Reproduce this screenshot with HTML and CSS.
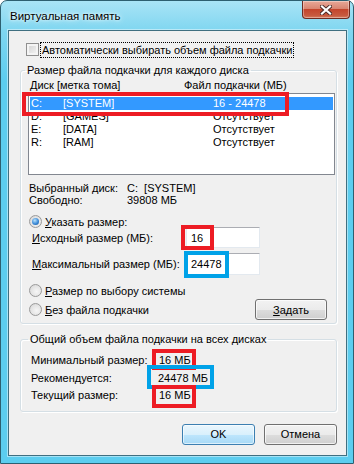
FILE: index.html
```html
<!DOCTYPE html>
<html lang="ru">
<head>
    <meta charset="UTF-8">
    <title>Виртуальная память</title>
    <link rel="stylesheet" href="styles.css">
</head>
<body>
<div class="window">
    <div class="titlebar">
        <span class="title">Виртуальная память</span>
        <div class="close">
            <svg width="12" height="10" viewBox="0 0 12 10">
                <path d="M2 1.5 L10 8.5 M10 1.5 L2 8.5" stroke="#4a2a26" stroke-width="4" stroke-linecap="square"/>
                <path d="M2 1.5 L10 8.5 M10 1.5 L2 8.5" stroke="#ffffff" stroke-width="2.2" stroke-linecap="square"/>
            </svg>
        </div>
    </div>

    <div class="client">
        <div class="check-row">
            <span class="checkbox"></span>
            <span class="focus">Автоматически выбирать объем файла подкачки</span>
        </div>

        <fieldset class="group disks">
            <legend>Размер файла подкачки для каждого диска</legend>
            <div class="list-head">
                <span class="col-disk">Диск [метка тома]</span>
                <span>Файл подкачки (МБ)</span>
            </div>
            <div class="listbox">
                <div class="row selected"><span class="c1">C:</span><span class="c2">[SYSTEM]</span><span>16 - 24478</span></div>
                <div class="row"><span class="c1">D:</span><span class="c2">[GAMES]</span><span>Отсутствует</span></div>
                <div class="row"><span class="c1">E:</span><span class="c2">[DATA]</span><span>Отсутствует</span></div>
                <div class="row"><span class="c1">R:</span><span class="c2">[RAM]</span><span>Отсутствует</span></div>
            </div>

            <div class="info">
                <span>Выбранный диск:</span><span>C:&nbsp; [SYSTEM]</span>
                <span>Свободно:</span><span>39808 МБ</span>
            </div>

            <div class="radio-row first">
                <span class="radio on"></span>
                <span><u>У</u>казать размер:</span>
            </div>
            <div class="field-row">
                <span class="field-label"><u>И</u>сходный размер (МБ):</span>
                <input class="edit" type="text" value="16">
            </div>
            <div class="field-row second">
                <span class="field-label"><u>М</u>аксимальный размер (МБ):</span>
                <input class="edit" type="text" value="24478">
            </div>
            <div class="radio-row system">
                <span class="radio"></span>
                <span><u>Р</u>азмер по выбору системы</span>
            </div>
            <div class="radio-row last">
                <span class="radio"></span>
                <span><u>Б</u>ез файла подкачки</span>
                <button class="btn set"><u>З</u>адать</button>
            </div>
        </fieldset>

        <fieldset class="group totals">
            <legend>Общий объем файла подкачки на всех дисках</legend>
            <div class="total-row"><span>Минимальный размер:</span><span>16 МБ</span></div>
            <div class="total-row"><span>Рекомендуется:</span><span class="wide">24478 МБ</span></div>
            <div class="total-row"><span>Текущий размер:</span><span>16 МБ</span></div>
        </fieldset>

        <div class="buttons">
            <button class="btn default">OK</button>
            <button class="btn">Отмена</button>
        </div>

        <!-- paint marks drawn over the dialog -->
        <div class="mark red mark-row"></div>
        <div class="mark red mark-initial"></div>
        <div class="mark blue mark-max"></div>
        <div class="mark red mark-min"></div>
        <div class="mark blue mark-rec"></div>
        <div class="mark red mark-cur"></div>
    </div>
</div>
</body>
</html>
```

FILE: styles.css
```css
:root {
    --frame: #5ccdef;
    --frame-dark: #2d5f70;
    --face: #f0f0f0;
    --group-line: #d5dfe5;
    --select: #3399ff;
    --paint-red: #ed1c24;
    --paint-blue: #00a2e8;
}

body {
    margin: 0;
    background: #ffffff;
    font-family: "Liberation Sans", Arial, sans-serif;
    font-size: 11px;
    color: #000;
    white-space: nowrap;
}

/* Window frame */
.window {
    width: 354px;
    height: 464px;
    box-sizing: border-box;
    border: 1px solid var(--frame-dark);
    border-radius: 7px 7px 0 0;
    background: linear-gradient(to bottom, #a9e4f6 0, #7fd6f0 30px, var(--frame) 80px, var(--frame) 100%);
    padding: 0 6px 7px 7px;
    display: flex;
    flex-direction: column;
}

.titlebar {
    height: 29px;
    display: flex;
    align-items: flex-start;
    flex-shrink: 0;
}

.title {
    margin: 7px 0 0 2px;
    font-size: 11.5px;
    line-height: 16px;
    text-shadow: 0 0 6px #e8f8fd, 0 0 3px #ffffff;
}

.close {
    margin-left: auto;
    margin-right: -3px;
    width: 48px;
    height: 18px;
    box-sizing: border-box;
    border: 1px solid #6e2c22;
    border-top: none;
    border-radius: 0 0 4px 4px;
    background: linear-gradient(to bottom, #e8a898 0, #d98672 45%, #c4452c 50%, #c75a3f 85%, #d77c5e 100%);
    box-shadow: inset 0 0 0 1px rgba(255, 255, 255, 0.35);
    display: flex;
    align-items: center;
    justify-content: center;
}

.client {
    flex: 1;
    position: relative;
    background: var(--face);
    border: 1px solid #3f6f80;
    box-shadow: 0 0 0 1px rgba(255, 255, 255, 0.45);
    padding: 11px 9px 0 11px;
}

/* Checkbox row */
.check-row {
    display: flex;
    align-items: center;
    height: 15px;
    padding-left: 6px;
}

.checkbox {
    width: 13px;
    height: 13px;
    box-sizing: border-box;
    border: 1px solid #8f8f8f;
    background: linear-gradient(135deg, #d0d0d0, #f7f7f7);
    box-shadow: inset 0 0 0 2px #f4f4f4;
    margin-right: 2px;
}

.focus {
    outline: 1px dotted #000;
    padding: 0 1px;
    line-height: 14px;
}

/* Group boxes */
.group {
    margin: 6px 0 0 0;
    padding: 0 1px 3px 7px;
    border: 1px solid var(--group-line);
    border-radius: 3px;
    box-shadow: inset 1px 1px 0 #fff, 1px 1px 0 #fff;
}

.group legend {
    padding: 0 2px;
    margin-left: -3px;
    line-height: 15px;
}

.list-head {
    display: flex;
    line-height: 15px;
    padding-left: 2px;
}

.col-disk {
    width: 154px;
}

.listbox {
    height: 82px;
    box-sizing: border-box;
    border: 1px solid #828790;
    background: #fff;
    padding: 3px 1px 0 1px;
}

.row {
    display: flex;
    height: 13px;
    line-height: 13px;
    padding-left: 1px;
}

.row.selected {
    background: var(--select);
    color: #fff;
}

.c1 {
    width: 32px;
}

.c2 {
    width: 150px;
}

.info {
    display: grid;
    grid-template-columns: 98px auto;
    line-height: 12px;
    margin-top: 7px;
    padding-left: 1px;
}

/* Radio rows and edit fields */
.radio-row {
    display: flex;
    align-items: center;
    height: 13px;
    padding-left: 1px;
    gap: 3px;
}

.radio-row.first {
    margin-top: 9px;
}

.radio-row.system {
    margin-top: 9px;
}

.radio-row.last {
    height: 21px;
    margin-top: 2px;
}

.radio {
    width: 13px;
    height: 13px;
    box-sizing: border-box;
    border-radius: 50%;
    border: 1px solid #9a9a9a;
    background: radial-gradient(circle at 60% 60%, #f6f6f6 0, #e4e4e4 55%, #cfcfcf 100%);
    position: relative;
}

.radio.on::after {
    content: '';
    position: absolute;
    left: 2px;
    top: 2px;
    width: 7px;
    height: 7px;
    border-radius: 50%;
    background: radial-gradient(circle at 40% 35%, #b8e2fb 0, #3b8ad8 55%, #16508f 100%);
}

.field-row {
    display: flex;
    align-items: center;
    height: 21px;
    margin-top: -1px;
    padding-left: 4px;
}

.field-row.second {
    margin-top: 5px;
    height: 22px;
}

.field-label {
    width: 154px;
}

.edit {
    width: 74px;
    height: 100%;
    box-sizing: border-box;
    margin: 0;
    border: 1px solid #e3e9ef;
    border-top-color: #abadb3;
    background: #fff;
    font: inherit;
    color: #000;
    padding: 0 0 0 4px;
}

/* Buttons */
.btn {
    height: 21px;
    box-sizing: border-box;
    border: 1px solid #707070;
    border-radius: 3px;
    background: linear-gradient(to bottom, #f2f2f2 0, #ebebeb 50%, #dddddd 51%, #cfcfcf 100%);
    box-shadow: inset 0 0 0 1px rgba(255, 255, 255, 0.7);
    font: inherit;
    color: #000;
    padding: 0;
}

.btn.set {
    width: 72px;
    margin-left: auto;
    margin-right: 8px;
}

.btn.default {
    border-color: #3c7fb1;
    background: linear-gradient(to bottom, #eaf6fd 0, #d9f0fc 50%, #bee6fd 51%, #a7d9f5 100%);
    box-shadow: inset 0 0 0 1px rgba(255, 255, 255, 0.6);
}

/* Totals group */
.totals {
    margin-top: 8px;
    padding: 5px 1px 6px 10px;
}

.total-row {
    display: flex;
    height: 17.5px;
    line-height: 17px;
}

.total-row span:first-child {
    width: 128px;
}

.total-row .wide {
    margin-left: -1px;
}

.buttons {
    display: flex;
    justify-content: flex-end;
    gap: 9px;
    margin-top: 12px;
    padding-right: 0;
}

.buttons .btn {
    width: 73px;
}

/* Paint annotations over the screenshot */
.mark {
    position: absolute;
    box-sizing: border-box;
    border: 4px solid;
}

.mark.red {
    border-color: var(--paint-red);
}

.mark.blue {
    border-color: var(--paint-blue);
}

.mark-row {
    left: 13px;
    top: 61px;
    width: 267px;
    height: 24px;
}

.mark-initial {
    left: 172px;
    top: 194px;
    width: 33px;
    height: 25px;
}

.mark-max {
    left: 175px;
    top: 220px;
    width: 45px;
    height: 27px;
}

.mark-min {
    left: 143px;
    top: 318px;
    width: 44px;
    height: 21px;
}

.mark-rec {
    left: 138px;
    top: 334px;
    width: 67px;
    height: 24px;
}

.mark-cur {
    left: 143px;
    top: 354px;
    width: 44px;
    height: 23px;
}
```
